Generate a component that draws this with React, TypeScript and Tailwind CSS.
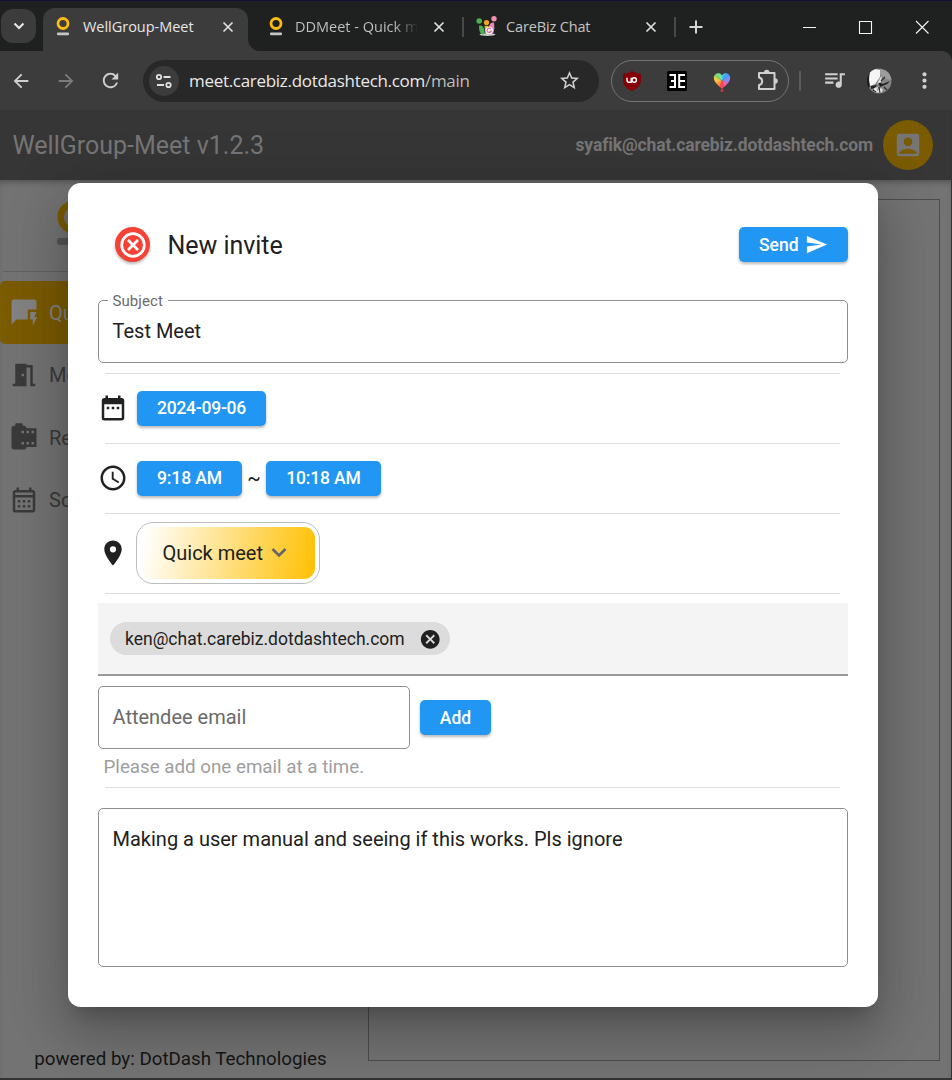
import type { ReactNode } from "react";
import {
  MdAccessTime,
  MdAccountBox,
  MdArrowBack,
  MdArrowForward,
  MdCameraRoll,
  MdCancel,
  MdDateRange,
  MdLocationOn,
  MdMeetingRoom,
  MdMoreVert,
  MdOutlineCalendarMonth,
  MdQueueMusic,
  MdQuickreply,
  MdRefresh,
  MdSend,
  MdStarBorder,
} from "react-icons/md";

function CloseX({ className = "" }: { className?: string }) {
  return (
    <svg viewBox="0 0 12 12" className={`h-3 w-3 shrink-0 ${className}`}>
      <path d="M1.5 1.5 10.5 10.5M10.5 1.5 1.5 10.5" stroke="#dedede" strokeWidth="1.7" />
    </svg>
  );
}

function RingLogo() {
  return (
    <svg viewBox="0 0 14 20" className="h-5 w-3.5 shrink-0">
      <circle cx="7" cy="6.5" r="5" fill="none" stroke="#fbbc14" strokeWidth="2.8" />
      <rect x="1" y="15.6" width="12" height="2.6" rx="1" fill="#c6c6c6" />
    </svg>
  );
}

function CareLogo() {
  return (
    <svg viewBox="0 0 22 22" className="h-[22px] w-[22px] shrink-0">
      <ellipse cx="11.5" cy="18.500" rx="8" ry="1.5" fill="#c9c9c9" />
      <circle cx="3.2" cy="5" r="2.8" fill="#4caf50" />
      <path d="M3 9.700C6.500 8.700 8.500 11.200 8.800 17.900L5.500 18.200C3.200 16.200 3 13.200 3 9.700Z" fill="#4caf50" />
      <circle cx="10.500" cy="6.500" r="2.600" fill="#f2a51d" />
      <path d="M8.500 9.700H12.500L12 17.200H9.300Z" fill="#f2b51d" />
      <circle cx="18" cy="2.700" r="2.700" fill="#f48fb1" />
      <path d="M13.500 9.200C14.500 6.700 16.500 6.200 18 6.700C18.500 11.200 18.500 14.200 17 17.200L11.500 18.200C12 14.200 12.500 12.200 13.500 9.200Z" fill="#ec86b4" />
      <circle cx="13.300" cy="14.400" r="3.600" fill="#fff" />
      <path d="M15 12.900A2.200 2.200 0 1 0 15.300 15.200H13.500" fill="none" stroke="#ec6ba5" strokeWidth="1.300" />
    </svg>
  );
}

function TabStrip() {
  return (
    <div className="flex h-[51px] items-end border-t border-[#12123a] bg-[#1f2120]">
      <div className="flex h-[50px] w-[43px] items-start pl-px pt-[8px]">
        <div className="grid h-[34px] w-[35px] place-items-center rounded-[12px] bg-[#3c3c3c]">
          <svg viewBox="0 0 12 8" className="h-2 w-3">
            <path d="M1.500 1.500 6 6 10.500 1.500" fill="none" stroke="#e8e8e8" strokeWidth="2" />
          </svg>
        </div>
      </div>
      <div className="flex h-[43px] w-[205px] items-center rounded-t-[12px] bg-[#3c3c3c] pb-[6px] pl-[13px] pr-[14px]">
        <RingLogo />
        <span className="ml-[13px] flex-1 whitespace-nowrap text-[14.500px] tracking-[-0.030px] text-[#e6e6e6]">WellGroup-Meet</span>
        <CloseX />
      </div>
      <div className="h-[12px] w-[12px] bg-[#3c3c3c]">
        <div className="h-full w-full rounded-bl-[12px] bg-[#1f2120]" />
      </div>
      <div className="flex h-[43px] w-[204px] items-center pb-[6px] pl-[9px] pr-[19px]">
        <RingLogo />
        <span className="ml-[12px] mr-[15px] w-[124px] overflow-hidden whitespace-nowrap bg-gradient-to-r from-[#c4c4c4] from-80% to-transparent to-100% bg-clip-text text-[14.500px] text-transparent">
          DDMeet - Quick meet
        </span>
        <CloseX />
      </div>
      <div className="flex h-[43px] w-[212px] items-center pb-[6px]">
        <div className="-ml-[2px] h-5 w-[2px] bg-[#484848]" />
        <div className="ml-[12px]">
          <CareLogo />
        </div>
        <span className="ml-[8px] flex-1 whitespace-nowrap text-[14.500px] tracking-[-0.150px] text-[#c4c4c4]">CareBiz Chat</span>
        <CloseX className="mr-[19px]" />
      </div>
      <div className="flex h-[43px] flex-1 items-center pb-[6px]">
        <div className="-ml-[2px] h-5 w-[2px] bg-[#484848]" />
        <svg viewBox="0 0 14 14" className="ml-[13px] h-3.5 w-3.5">
          <path d="M7 .5V13.500M.5 7H13.500" stroke="#d6d6d6" strokeWidth="2" />
        </svg>
        <svg viewBox="0 0 130 16" className="ml-auto mr-[22px] h-4 w-[130px]" fill="none" stroke="#f4f4f4" strokeWidth="1.100">
          <path d="M3 8.500H16M116 2 128.500 14.500M128.500 2 116 14.500" />
          <path d="M59.500 2.500H71.500V14.500H59.500Z" />
        </svg>
      </div>
    </div>
  );
}

function HeartPin() {
  return (
    <svg viewBox="0 0 18 20" className="h-5 w-[18px]">
      <defs>
        <clipPath id="heart">
          <path d="M9 17C6 14 .8 10.500 .8 5.800C.8 1 6.500 -.5 9 3.200C11.500 -.5 17.200 1 17.200 5.800C17.200 10.500 12 14 9 17Z" />
        </clipPath>
      </defs>
      <g clipPath="url(#heart)">
        <path d="M9 9 0 0H9Z" fill="#7be08a" />
        <path d="M9 9 0 0V6Z" fill="#a6d95a" />
        <path d="M9 9 0 5V13Z" fill="#ffc23c" />
        <path d="M9 9V0H14Z" fill="#35c8f5" />
        <path d="M9 9 13 0H18V5Z" fill="#4a9df8" />
        <path d="M9 9 18 4V12Z" fill="#8f86f0" />
        <path d="M9 9 18 11 12 18Z" fill="#ea62b8" />
        <path d="M9 9 0 11 6 18Z" fill="#ff9138" />
        <path d="M9 8 4 19H14Z" fill="#f9484f" />
      </g>
      <path d="M7 19.500 9 16.500 11 19.500Z" fill="#e53935" />
    </svg>
  );
}

function Toolbar() {
  return (
    <div className="bg-[#1f2120]">
      <div className="flex h-[59px] items-center rounded-tr-[10px] bg-[#3c3c3c] text-[#d0d0d0]">
        <MdArrowBack className="ml-[10px] h-[22px] w-[22px]" />
        <MdArrowForward className="ml-[23px] h-[22px] w-[22px] text-[#7c7c7c]" />
        <MdRefresh className="ml-[22px] h-[23px] w-[23px]" />
        <div className="ml-[21px] flex h-[42px] w-[456px] items-center rounded-full bg-[#282828]">
          <div className="ml-[6px] grid h-[30px] w-[30px] place-items-center rounded-full bg-[#3c3c3c]">
            <svg viewBox="0 0 18 16" className="h-4 w-[18px]" fill="none" stroke="#e0e0e0" strokeWidth="1.800">
              <circle cx="4" cy="4" r="2.200" />
              <path d="M8.500 4H15.500M2 12H9" />
              <circle cx="13.500" cy="12" r="2.200" />
            </svg>
          </div>
          <span className="ml-[10px] flex-1 whitespace-nowrap text-[17px] tracking-[-0.300px] text-[#eaeaea]">
            meet.carebiz.dotdashtech.com<span className="text-[#bdbdbd]">/main</span>
          </span>
          <MdStarBorder className="mr-[18px] h-[23px] w-[23px]" />
        </div>
        <div className="ml-[12px] flex h-[42px] w-[178px] items-center rounded-full border border-[#747474]">
          <svg viewBox="0 0 20 20" className="ml-[10px] h-5 w-5">
            <path d="M10 0C13 2 15.500 2.500 19 3V8C19 14 16 17.500 10 20C4 17.500 1 14 1 8V3C4.500 2.500 7 2 10 0Z" fill="#850008" />
            <path d="M5 6.700V8.800Q5 11.300 7 11.300H9.200V6.700" fill="none" stroke="#fff" strokeWidth="1.400" />
            <circle cx="12.200" cy="9" r="2.200" fill="none" stroke="#fff" strokeWidth="1.400" />
          </svg>
          <svg viewBox="0 0 20 20" className="ml-[25px] h-5 w-5">
            <rect width="20" height="20" rx="1.500" fill="#000" />
            <path d="M2.500 4H8M2.500 16H8M4 10H8M8 3V17M18 4H12.500M18 10H12.500M18 16H12.500M12.200 3V17" fill="none" stroke="#fff" strokeWidth="2" />
          </svg>
          <div className="ml-[26px] pt-[3px]">
            <HeartPin />
          </div>
          <svg viewBox="0 0 24 24" className="ml-[24px] h-[24px] w-[24px]">
            <path
              d="M4 4H19.500V20H4V16A3.800 3.800 0 0 0 4 8.500V4Z"
              fill="none"
              stroke="#d0d0d0"
              strokeWidth="2"
              strokeLinejoin="round"
            />
            <path d="M9 3.500A2.700 2.700 0 0 1 14.500 3.500ZM20 9.200A2.700 2.700 0 0 1 20 14.700Z" fill="#d0d0d0" />
          </svg>
        </div>
        <div className="ml-[10px] h-5 w-[2px] bg-[#5b5b5b]" />
        <MdQueueMusic className="mb-[3px] ml-[21px] h-[25px] w-[25px]" />
        <svg viewBox="0 0 26 26" className="ml-[19px] h-[26px] w-[26px]">
          <defs>
            <clipPath id="avatar">
              <circle cx="13" cy="13" r="12.500" />
            </clipPath>
          </defs>
          <g clipPath="url(#avatar)">
            <rect width="26" height="26" fill="#858585" />
            <path d="M0 0H5L3 9 5 16 3 20 8 26H0Z" fill="#1c1c1c" />
            <path d="M4 4 9 1 14 2 14 9 9 16 4 18 3 12Z" fill="#f5f5f5" />
            <path d="M14 1 23 4 26 12 20 11 14 6Z" fill="#9c9c9c" />
            <path d="M12 14 17 16 24 13 21 16 14 19ZM5 18 11 17 9 20 5 21Z" fill="#1f1f1f" />
            <path d="M14 10 16 8 15 14 11 16ZM8 20 12 19 11 23 15 20 17 22 15 25 8 24Z" fill="#e0e0e0" />
            <path d="M15 13 19 9M7 22 10 24M13 19 14 25M18 19 21 22" fill="none" stroke="#2a2a2a" strokeWidth="1.100" />
          </g>
        </svg>
        <MdMoreVert className="ml-[20px] h-[25px] w-[25px]" />
      </div>
    </div>
  );
}

function BlueButton({ className = "", children }: { className?: string; children: ReactNode }) {
  return (
    <button
      className={`flex h-[35px] items-center justify-center whitespace-nowrap rounded-[5px] bg-[#2196f3] text-[17.500px] font-medium text-white shadow-[0_2px_3px_rgba(0,0,0,0.28)] ${className}`}
    >
      {children}
    </button>
  );
}

function Divider() {
  return <div className="mx-[7.500px] h-[1.250px] shrink-0 bg-[#dedede]" />;
}

function NavItem({ icon, label, active = false }: { icon: ReactNode; label: string; active?: boolean }) {
  return (
    <div
      className={`flex h-[62.500px] items-center overflow-hidden whitespace-nowrap rounded-[5px] pl-[9px] text-[20px] ${
        active ? "bg-[#7a5b00] text-[#828282]" : "text-[#3a3a3a]"
      }`}
    >
      <span className="w-[40px] shrink-0 text-[30px]">{icon}</span>
      <span className="pt-px">{label}</span>
    </div>
  );
}

function Background() {
  return (
    <div className="flex h-[898px] bg-[#737373] shadow-[inset_0_5px_6px_-3px_rgba(0,0,0,0.3)]">
      <aside className="flex w-[361px] flex-col">
        <div className="ml-[3px] flex h-[92px] items-start border-b border-[#606060] pl-[54px] pt-[21px]">
          <svg viewBox="0 0 40 46" className="h-[46px] w-10">
            <circle cx="17" cy="16" r="13.300" fill="none" stroke="#7a5b00" strokeWidth="6.500" />
            <rect x="0" y="37" width="34" height="7" rx="3" fill="#535557" />
          </svg>
        </div>
        <nav className="mt-[9px] flex flex-col">
          <NavItem active icon={<MdQuickreply />} label="Quick meet" />
          <NavItem icon={<MdMeetingRoom />} label="Meeting room" />
          <NavItem icon={<MdCameraRoll />} label="Recordings" />
          <NavItem icon={<MdOutlineCalendarMonth />} label="Schedule" />
        </nav>
        <div className="mb-[6px] mt-auto text-center text-[18.750px]/[25px] text-[#161616]">powered by: DotDash Technologies</div>
      </aside>
      <div className="mb-[17px] ml-[7px] mt-[19px] w-[572px] border border-[#4c4c4c]" />
    </div>
  );
}

function InviteDialog() {
  return (
    <section className="absolute left-[67.500px] top-[73px] flex h-[823.750px] w-[810px] flex-col rounded-[12.500px] bg-white px-[30px] text-[20px] text-[#212121] shadow-[0_14px_19px_-9px_rgba(0,0,0,0.2),0_30px_48px_4px_rgba(0,0,0,0.14),0_11px_58px_10px_rgba(0,0,0,0.12)]">
      <header className="mt-[44px] flex h-[35px] items-center">
        <button className="ml-[17.500px] grid h-[35px] w-[35px] place-items-center rounded-full bg-[#f44336] shadow-[0_2px_3px_rgba(0,0,0,0.28)]">
          <svg viewBox="0 0 30 30" className="h-[30px] w-[30px]" fill="none" stroke="#fff" strokeWidth="2.700">
            <circle cx="15" cy="15" r="11.300" />
            <path d="M10 10 20 20M20 10 10 20" />
          </svg>
        </button>
        <h1 className="ml-[17.500px] pt-[2px] text-[25px]/[35px] tracking-[-0.050px]">New invite</h1>
        <BlueButton className="ml-auto w-[108.500px] pt-px">
          Send
          <MdSend className="mb-px ml-[6px] h-[23px] w-[23px]" />
        </BlueButton>
      </header>

      <fieldset className="mt-[28.500px] h-[72.500px] shrink-0 rounded-[5px] border border-[#8e8e8e] pl-[9px]">
        <legend className="h-[20px] px-[5px] text-[15px]/[21px] tracking-[0.080px] text-[#6b6b6b]">Subject</legend>
        <div className="pl-[5px] pt-[5.500px] leading-[30px]">Test Meet</div>
      </fieldset>
      <div className="h-[10px] shrink-0" />
      <Divider />
      <div className="flex h-[68.750px] items-center pb-px">
        <MdDateRange className="h-[30px] w-[30px]" />
        <BlueButton className="ml-[9.500px] w-[129px] tracking-[-0.250px]">2024-09-06</BlueButton>
      </div>
      <Divider />
      <div className="flex h-[68.750px] items-center pb-px">
        <MdAccessTime className="h-[30px] w-[30px]" />
        <BlueButton className="ml-[9.500px] w-[105px] tracking-[-0.100px]">9:18 AM</BlueButton>
        <span className="w-[24px] text-center">~</span>
        <BlueButton className="w-[115px] tracking-[-0.150px]">10:18 AM</BlueButton>
      </div>
      <Divider />
      <div className="flex h-[78.750px] items-center pb-px">
        <MdLocationOn className="h-[30px] w-[30px]" />
        <button className="ml-[8.500px] flex h-[62px] w-[184px] items-center rounded-[17px] border-[1.250px] border-[#bdbdbd] bg-white p-[4px]">
          <span className="flex h-full w-full items-center rounded-[11px] bg-[linear-gradient(100deg,#fff_2%,#ffc107_98%)] pl-[21.500px]">
            Quick meet
            <svg viewBox="0 0 16 12" className="ml-[8px] h-3 w-4">
              <path d="M1.500 2 8 8.500 14.500 2" fill="none" stroke="#666" strokeWidth="2.600" />
            </svg>
          </span>
        </button>
      </div>
      <Divider />
      <div className="mt-[9px] flex h-[72.500px] shrink-0 border-b-[2.500px] border-[#9b9b9b] bg-[#f4f4f4] pl-[12.500px] pt-[19px]">
        <div className="flex h-[32.500px] w-[340px] items-center whitespace-nowrap rounded-full bg-[#dcdcdc] pl-[15px] pt-[2px] text-[17.500px]">
          ken@chat.carebiz.dotdashtech.com
          <MdCancel className="ml-auto mr-[9px] h-[22.500px] w-[22.500px]" />
        </div>
      </div>
      <div className="mt-[10px] flex h-[63px] items-center">
        <div className="flex h-full w-[312.500px] items-center rounded-[5px] border border-[#8e8e8e] pl-[14px] text-[#6a6a6a]">
          Attendee email
        </div>
        <BlueButton className="ml-[10px] w-[71px] pt-px">Add</BlueButton>
      </div>
      <div className="mt-[4px] h-[34.250px] pl-[6px] text-[18.750px]/[28px] text-[#9e9e9e]">Please add one email at a time.</div>
      <Divider />
      <div className="mt-[19.500px] h-[159px] rounded-[5px] border border-[#8e8e8e] px-[14px] pt-[15px] leading-[30px]">
        Making a user manual and seeing if this works. Pls ignore
      </div>
    </section>
  );
}

export default function App() {
  return (
    <div className="flex h-[1080px] w-[952px] flex-col overflow-hidden bg-[#333] font-['Roboto',sans-serif]">
      <div className="shrink-0 font-['Open_Sans',sans-serif]">
        <TabStrip />
        <Toolbar />
      </div>
      <main className="relative h-[968px] w-[951px]">
        <header className="flex h-[70px] items-center bg-[#363636] pl-[12.500px] pr-[18px] text-[#757575]">
          <h1 className="flex-1 pt-[2px] text-[25px]">WellGroup-Meet v1.2.3</h1>
          <span className="text-[17.500px] font-bold tracking-[-0.130px]">syafik@chat.carebiz.dotdashtech.com</span>
          <div className="ml-[10px] grid h-[50px] w-[50px] place-items-center rounded-full bg-[#7a5b00]">
            <MdAccountBox className="h-[30px] w-[30px]" />
          </div>
        </header>
        <Background />
        <InviteDialog />
      </main>
    </div>
  );
}
